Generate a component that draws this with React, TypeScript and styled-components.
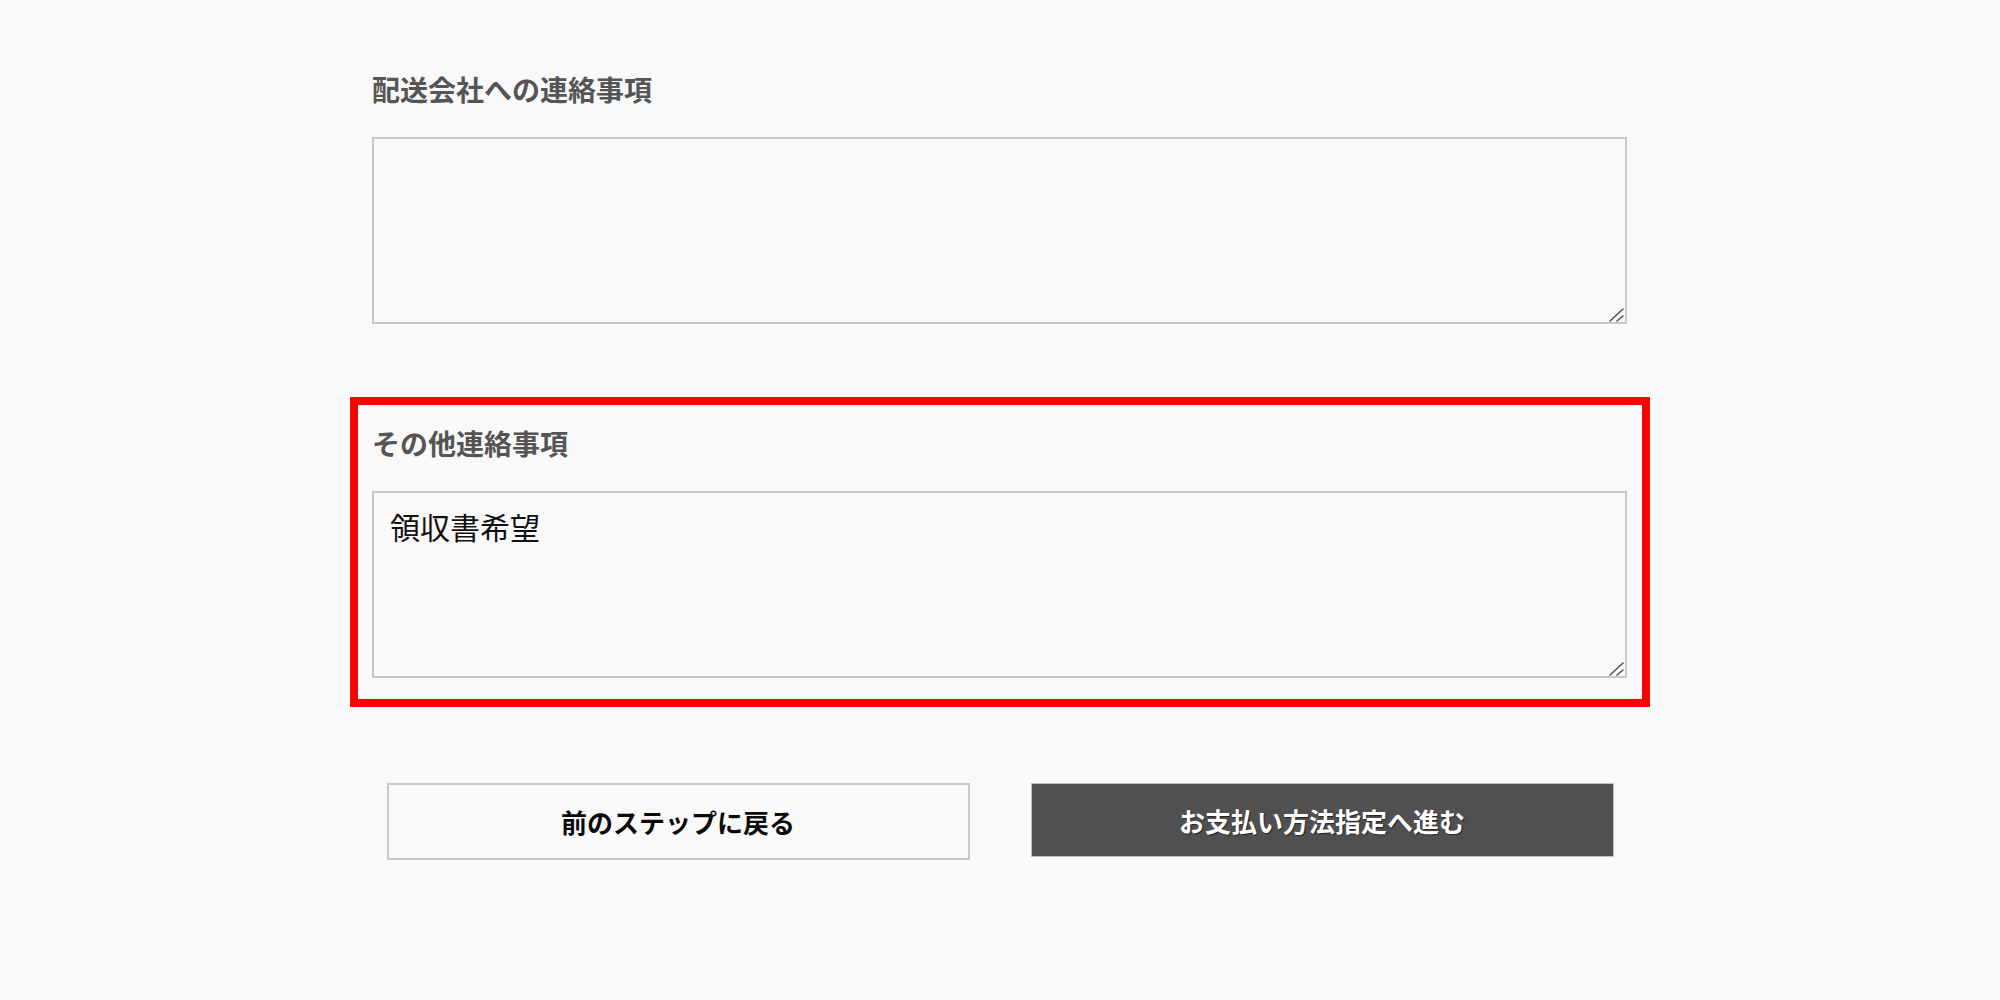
import React from 'react';
import styled, { createGlobalStyle } from 'styled-components';

const GlobalStyle = createGlobalStyle`
  body {
    margin: 0;
    background: #f9f9f9;
    font-family: "Noto Sans CJK JP", "Noto Sans", sans-serif;
  }
`;

const Page = styled.div`
  width: 1300px;
  margin: 0 auto;
  padding-top: 43px;
  display: flex;
  flex-direction: column;
  gap: 44px;
`;

const Section = styled.section<{ $highlight?: boolean }>`
  border: 8px solid ${(p) => (p.$highlight ? '#ff0000' : 'transparent')};
  padding: 17px 15px 21px 14px;
  display: flex;
  flex-direction: column;
`;

const Label = styled.label`
  font-size: 28px;
  line-height: 42px;
  font-weight: 700;
  color: #555555;
  margin-bottom: 27px;
`;

const NoteField = styled.div`
  position: relative;
`;

const Note = styled.textarea`
  display: block;
  box-sizing: border-box;
  width: 100%;
  height: 187px;
  margin: 0;
  padding: 12px 16px;
  border: 2px solid #c8c8c8;
  background: #f9f9f9;
  font-family: "Noto Sans CJK JP", "Noto Sans", sans-serif;
  font-size: 30px;
  line-height: 1.4;
  color: #111111;
  resize: none;
  outline: none;
`;

const Grip = styled.svg`
  position: absolute;
  right: 3px;
  bottom: 2px;
  width: 16px;
  height: 16px;
  pointer-events: none;
`;

const Actions = styled.div`
  display: flex;
  justify-content: center;
  align-items: flex-start;
  gap: 61px;
  margin-top: 76px;
`;

const StepButton = styled.button<{ $primary?: boolean }>`
  box-sizing: border-box;
  width: 583px;
  height: ${(p) => (p.$primary ? '74px' : '77px')};
  font-family: "Noto Sans CJK JP", "Noto Sans", sans-serif;
  font-size: 26px;
  font-weight: 700;
  cursor: pointer;
  border: ${(p) => (p.$primary ? '1px solid #bdbdbd' : '2px solid #c9c9c9')};
  background: ${(p) => (p.$primary ? '#505050' : '#f9f9f9')};
  color: ${(p) => (p.$primary ? '#ffffff' : '#0a0a0a')};
  text-shadow: ${(p) => (p.$primary ? '1px 1px 1px rgba(0,0,0,0.55)' : 'none')};
`;

const NoteBox = ({ id, value }: { id: string; value?: string }) => (
  <NoteField>
    <Note id={id} defaultValue={value} />
    <Grip viewBox="0 0 16 16">
      <path d="M2 15 L15 3 M9 15 L15 10" stroke="#555" strokeWidth="1.6" strokeLinecap="round" fill="none" />
    </Grip>
  </NoteField>
);

export default function App() {
  return (
    <>
      <GlobalStyle />
      <Page>
        <Section>
          <Label htmlFor="carrier-note">配送会社への連絡事項</Label>
          <NoteBox id="carrier-note" />
        </Section>
        <Section $highlight>
          <Label htmlFor="other-note">その他連絡事項</Label>
          <NoteBox id="other-note" value="領収書希望" />
        </Section>
      </Page>
      <Actions>
        <StepButton>前のステップに戻る</StepButton>
        <StepButton $primary>お支払い方法指定へ進む</StepButton>
      </Actions>
    </>
  );
}
